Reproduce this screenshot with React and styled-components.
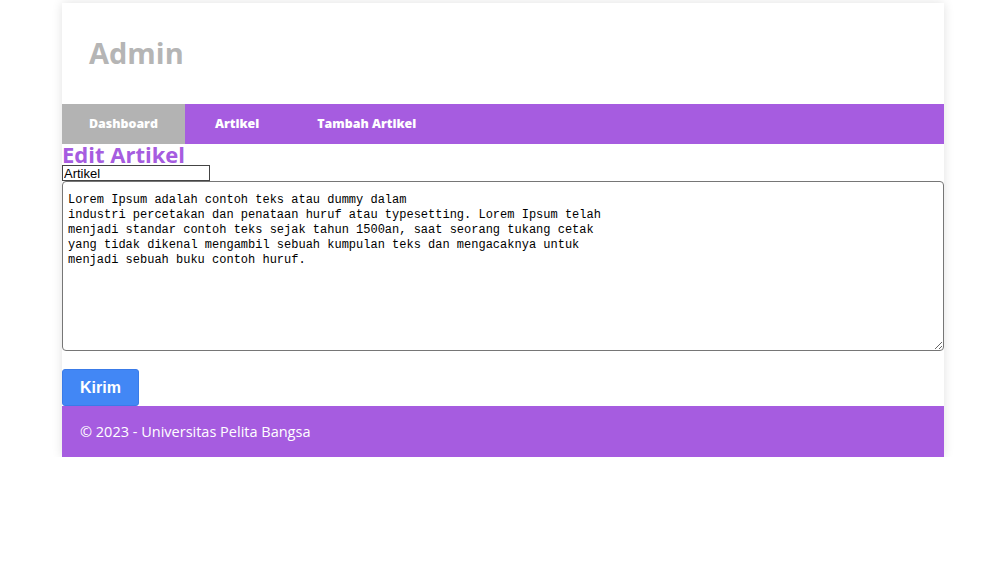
import React, { useState } from "react";
import styled, { createGlobalStyle } from "styled-components";

const GlobalStyle = createGlobalStyle`
  body {
    margin: 0;
    background: #fff;
    font-family: "Open Sans", sans-serif;
  }
`;

const Container = styled.div`
  width: 882px;
  margin: 3px 0 0 62px;
  background: #fff;
  box-shadow: 0 0 10px rgba(0, 0, 0, 0.12);
`;

const Header = styled.header`
  height: 101px;
  display: flex;
  align-items: center;
  padding-left: 27px;
`;

const Title = styled.h1`
  margin: 0 0 2px;
  font-size: 29px;
  font-weight: 700;
  color: #b5b5b5;
`;

const Nav = styled.nav`
  display: flex;
  height: 40px;
  background: #a65ce0;
`;

const NavLink = styled.a`
  display: flex;
  align-items: center;
  padding: 0 ${(p) => p.$pad || "28px"} 2px;
  font-size: 12.4px;
  font-weight: 800;
  color: #fff;
  text-decoration: none;
  background: ${(p) => (p.$active ? "#b3b3b3" : "transparent")};
`;

const Main = styled.main`
  display: flex;
  flex-direction: column;
  align-items: flex-start;
`;

const PageTitle = styled.h2`
  margin: 0;
  font-size: 22px;
  line-height: 21px;
  font-weight: 700;
  color: #a65ce0;
`;

const TitleInput = styled.input`
  width: 148px;
  height: 16px;
  box-sizing: border-box;
  margin: 0;
  padding: 0 1px;
  border: 1px solid #444;
  font-family: "Liberation Sans", Arial, sans-serif;
  font-size: 13px;
  color: #000;
`;

const ContentArea = styled.textarea`
  width: 100%;
  height: 170px;
  box-sizing: border-box;
  margin: 0;
  padding: 11px 5px 10px;
  border: 1px solid #767676;
  border-radius: 4px;
  font-family: "Liberation Mono", "DejaVu Sans Mono", monospace;
  font-size: 12px;
  line-height: 15px;
  color: #000;
  resize: both;
`;

const SubmitButton = styled.button`
  margin-top: 18px;
  width: 77px;
  height: 37px;
  border: 1px solid #3a7be8;
  border-radius: 3px;
  background: #4287f5;
  color: #fff;
  font-family: "Liberation Sans", Arial, sans-serif;
  font-size: 16px;
  font-weight: 700;
  cursor: pointer;
`;

const Footer = styled.footer`
  height: 51px;
  display: flex;
  align-items: center;
  padding-left: 18px;
  background: #a65ce0;
  color: #fff;
  font-size: 14.5px;
`;

const initialText =
  "Lorem Ipsum adalah contoh teks atau dummy dalam\nindustri percetakan dan penataan huruf atau typesetting. Lorem Ipsum telah\nmenjadi standar contoh teks sejak tahun 1500an, saat seorang tukang cetak\nyang tidak dikenal mengambil sebuah kumpulan teks dan mengacaknya untuk\nmenjadi sebuah buku contoh huruf.";

export default function App() {
  const [judul, setJudul] = useState("Artikel");
  const [isi, setIsi] = useState(initialText);

  return (
    <>
      <GlobalStyle />
      <Container>
        <Header>
          <Title>Admin</Title>
        </Header>
        <Nav>
          <NavLink href="#" $active $pad="27px">
            Dashboard
          </NavLink>
          <NavLink href="#" $pad="30px">
            Artikel
          </NavLink>
          <NavLink href="#" $pad="28px">
            Tambah Artikel
          </NavLink>
        </Nav>
        <Main>
          <PageTitle>Edit Artikel</PageTitle>
          <TitleInput
            type="text"
            value={judul}
            onChange={(e) => setJudul(e.target.value)}
          />
          <ContentArea
            spellCheck={false}
            value={isi}
            onChange={(e) => setIsi(e.target.value)}
          />
          <SubmitButton type="submit">Kirim</SubmitButton>
        </Main>
        <Footer>© 2023 - Universitas Pelita Bangsa</Footer>
      </Container>
    </>
  );
}
